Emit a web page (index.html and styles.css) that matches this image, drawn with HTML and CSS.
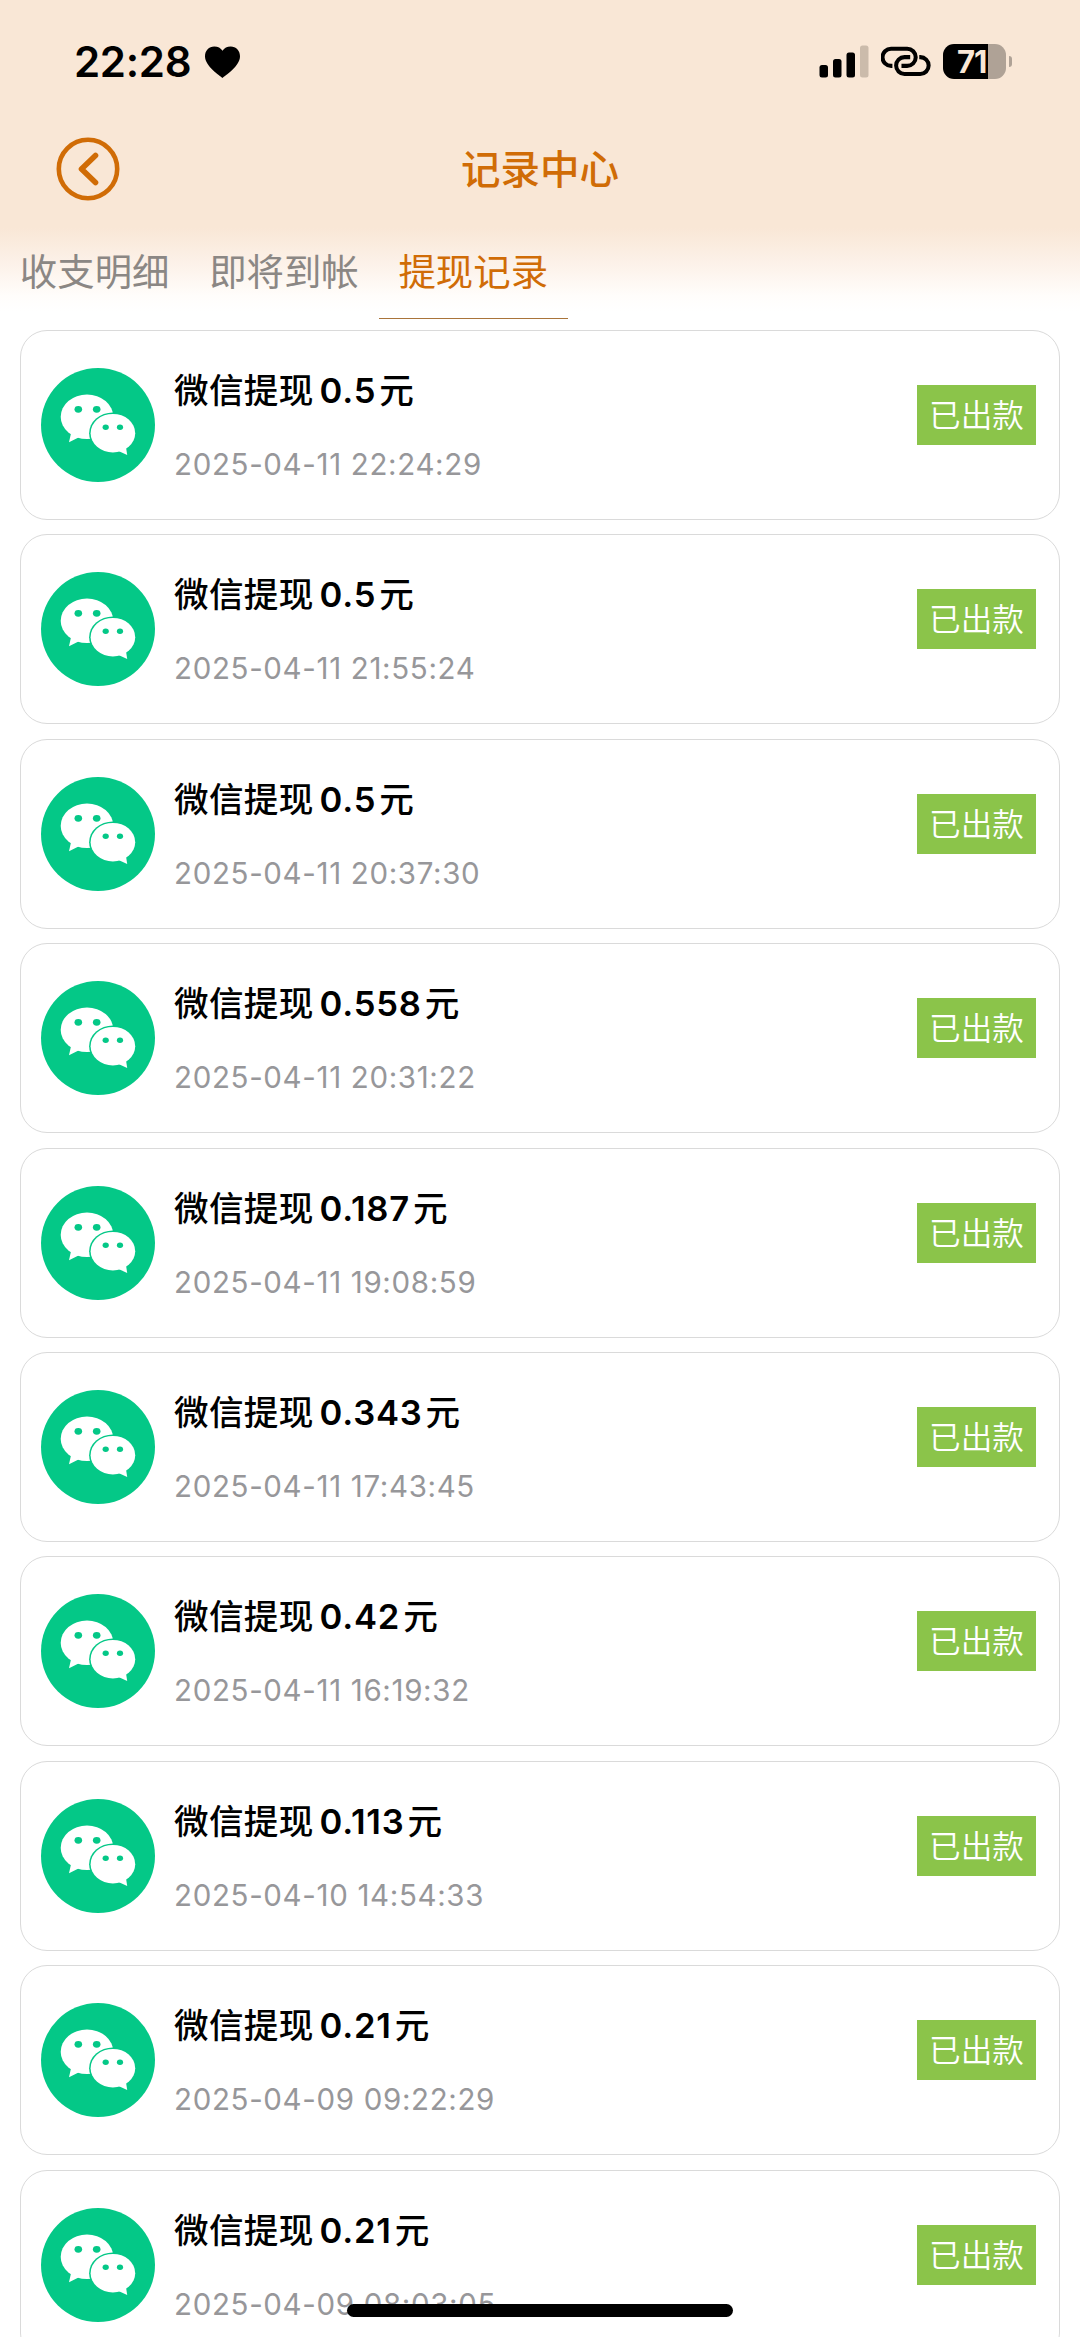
FILE: index.html
```html
<!doctype html>
<html lang="zh-CN">
  <head>
    <meta charset="UTF-8" />
    <meta name="viewport" content="width=device-width, initial-scale=1.0" />
    <title>记录中心</title>
    <link rel="stylesheet" href="styles.css">
  </head>

  <body>
    <!-- shared icon -->
    <svg class="sprite">
      <symbol id="wechat" viewBox="0 0 114 114">
        <circle cx="57" cy="57" r="57" fill="#04c887" />
        <g fill="#fff">
          <ellipse cx="46" cy="48.8" rx="26.3" ry="22.3" />
          <path d="M30.3 64 28 74.3 37.5 69.6z" />
        </g>
        <ellipse cx="71.9" cy="65.2" rx="23.8" ry="20.8" fill="#04c887" />
        <g fill="#fff">
          <ellipse cx="71.9" cy="65.2" rx="22.3" ry="19.3" />
          <path d="M78 83.3 86.2 86.9 84.8 78z" />
        </g>
        <g fill="#04c887">
          <ellipse cx="37.3" cy="41.3" rx="3.8" ry="3.4" />
          <ellipse cx="55.7" cy="41.3" rx="3.8" ry="3.4" />
          <ellipse cx="64.7" cy="59.3" rx="3.1" ry="2.7" />
          <ellipse cx="79" cy="59.3" rx="3.1" ry="2.7" />
        </g>
      </symbol>
    </svg>

    <header class="header">
      <div class="status-bar">
        <span class="time">22:28</span>
        <svg class="heart" viewBox="0 0 35 32">
          <path d="M17.5 32C15 29.6 0 20.5 0 10.3 0 4.5 4 .5 9.3 .5c3.500 0 6.500 1.500 8.200 4.300C19.200 2 22.200 .5 25.700 .5 31 .5 35 4.500 35 10.300 35 20.500 20 29.600 17.500 32z" />
        </svg>
        <svg class="signal" viewBox="0 0 50 33">
          <rect x="0.5" y="20" width="8.5" height="12.5" rx="2.5" />
          <rect x="14" y="14" width="8.5" height="18.5" rx="2.5" />
          <rect x="27.5" y="7.5" width="8.5" height="25" rx="2.5" />
          <rect x="41" y="0.5" width="8.5" height="32" rx="2.5" fill="#cbbbab" />
        </svg>
        <svg class="link" viewBox="298 79 149 92">
          <path d="M332 138h-4a25.500 25.500 0 0 1 0-51h48a25.500 25.500 0 0 1 0 51h-17" />
          <path d="M385 112h-17a25 25 0 0 0 0 50h47a25 25 0 0 0 0-50h-3" />
        </svg>
        <div class="battery">
          <div class="battery-body">71</div>
          <div class="battery-tip"></div>
        </div>
      </div>

      <div class="nav-bar">
        <svg class="back" viewBox="0 0 64 64">
          <circle cx="32" cy="32" r="29.2" />
          <path d="M39.500 18.500 25.500 32 39.500 45.500" />
        </svg>
        <h1>记录中心</h1>
      </div>

      <nav class="tabs">
        <a class="tab">收支明细</a>
        <a class="tab">即将到帐</a>
        <a class="tab active">提现记录</a>
      </nav>
    </header>

    <main class="list">
      <div class="card">
        <svg class="icon"><use href="#wechat" /></svg>
        <div class="info">
          <div class="title">微信提现<span class="num">0.5</span>元</div>
          <div class="date">2025-04-11 22:24:29</div>
        </div>
        <span class="badge">已出款</span>
      </div>
      <div class="card">
        <svg class="icon"><use href="#wechat" /></svg>
        <div class="info">
          <div class="title">微信提现<span class="num">0.5</span>元</div>
          <div class="date">2025-04-11 21:55:24</div>
        </div>
        <span class="badge">已出款</span>
      </div>
      <div class="card">
        <svg class="icon"><use href="#wechat" /></svg>
        <div class="info">
          <div class="title">微信提现<span class="num">0.5</span>元</div>
          <div class="date">2025-04-11 20:37:30</div>
        </div>
        <span class="badge">已出款</span>
      </div>
      <div class="card">
        <svg class="icon"><use href="#wechat" /></svg>
        <div class="info">
          <div class="title">微信提现<span class="num">0.558</span>元</div>
          <div class="date">2025-04-11 20:31:22</div>
        </div>
        <span class="badge">已出款</span>
      </div>
      <div class="card">
        <svg class="icon"><use href="#wechat" /></svg>
        <div class="info">
          <div class="title">微信提现<span class="num">0.187</span>元</div>
          <div class="date">2025-04-11 19:08:59</div>
        </div>
        <span class="badge">已出款</span>
      </div>
      <div class="card">
        <svg class="icon"><use href="#wechat" /></svg>
        <div class="info">
          <div class="title">微信提现<span class="num">0.343</span>元</div>
          <div class="date">2025-04-11 17:43:45</div>
        </div>
        <span class="badge">已出款</span>
      </div>
      <div class="card">
        <svg class="icon"><use href="#wechat" /></svg>
        <div class="info">
          <div class="title">微信提现<span class="num">0.42</span>元</div>
          <div class="date">2025-04-11 16:19:32</div>
        </div>
        <span class="badge">已出款</span>
      </div>
      <div class="card">
        <svg class="icon"><use href="#wechat" /></svg>
        <div class="info">
          <div class="title">微信提现<span class="num">0.113</span>元</div>
          <div class="date">2025-04-10 14:54:33</div>
        </div>
        <span class="badge">已出款</span>
      </div>
      <div class="card">
        <svg class="icon"><use href="#wechat" /></svg>
        <div class="info">
          <div class="title">微信提现<span class="num">0.21</span>元</div>
          <div class="date">2025-04-09 09:22:29</div>
        </div>
        <span class="badge">已出款</span>
      </div>
      <div class="card">
        <svg class="icon"><use href="#wechat" /></svg>
        <div class="info">
          <div class="title">微信提现<span class="num">0.21</span>元</div>
          <div class="date">2025-04-09 08:03:05</div>
        </div>
        <span class="badge">已出款</span>
      </div>
    </main>

    <div class="home-indicator"></div>
  </body>
</html>
```

FILE: styles.css
```css
* {
  box-sizing: border-box;
}
body {
  position: relative;
  margin: 0;
  height: 2337px;
  overflow: hidden;
  background: #fff;
  font-family: Inter, 'Noto Sans CJK SC', sans-serif;
}
svg {
  display: block;
  flex: none;
}
.sprite {
  display: none;
}

/* Header */
.header {
  height: 319px;
  background: linear-gradient(#f9e7d6 0, #f9e7d6 228px, #fcf1e8 262px, #fffdfb 296px, #fff 312px);
}
.status-bar {
  display: flex;
  align-items: center;
  height: 122px;
  padding: 0 68px 0 74px;
}
.time {
  padding-top: 1px;
  font-size: 42px;
  font-weight: 600;
  line-height: 50px;
  letter-spacing: -0.3px;
}
.heart {
  width: 35px;
  height: 32px;
  margin: 2px 0 0 14px;
}
.signal {
  width: 50px;
  height: 33px;
  margin-left: auto;
}
.link {
  width: 50px;
  height: 31px;
  margin: 1px 0 0 12px;
  fill: none;
  stroke: #000;
  stroke-width: 12;
  stroke-linecap: butt;
}
.battery {
  display: flex;
  align-items: center;
  gap: 3px;
  margin-left: 12px;
}
.battery-body {
  width: 63px;
  height: 35px;
  padding-left: 14px;
  border-radius: 11px;
  background: linear-gradient(90deg, #000 45px, #afa296 45px);
  color: #f9e7d6;
  font-size: 31px;
  font-weight: 700;
  line-height: 35px;
  letter-spacing: -1px;
}
.battery-tip {
  width: 3px;
  height: 11px;
  border-radius: 0 4px 4px 0;
  background: #afa296;
}

.nav-bar {
  display: grid;
  grid-template-columns: 64px 1fr 64px;
  align-items: center;
  height: 94px;
  padding: 0 56px;
}
.back {
  width: 64px;
  height: 64px;
  fill: none;
  stroke: #d06c06;
  stroke-width: 4.6;
  stroke-linecap: round;
  stroke-linejoin: round;
}
.back path {
  stroke-width: 5.6;
}
.nav-bar h1 {
  margin: 2px 0 0;
  color: #d06c06;
  font-size: 39.5px;
  font-weight: 500;
  line-height: 56px;
  text-align: center;
}

.tabs {
  display: flex;
  height: 103px;
}
.tab {
  width: 189.3px;
  padding-top: 31px;
  color: #8b8784;
  font-size: 37.4px;
  line-height: 52px;
  text-align: center;
}
.tab.active {
  border-bottom: 1px solid #a9743a;
  color: #d06c06;
}

/* Records */
.list {
  display: flex;
  flex-direction: column;
  gap: 14.4px;
  padding: 11px 20px 0;
}
.card {
  display: flex;
  flex: none;
  align-items: flex-start;
  height: 190px;
  padding: 0 23px 0 19.5px;
  border: 1px solid #dadada;
  border-radius: 27px;
}
.icon {
  width: 114px;
  height: 114px;
  margin-top: 37px;
}
.info {
  flex: 1;
  padding: 33px 0 0 19.5px;
}
.title {
  font-size: 34.6px;
  font-weight: 500;
  line-height: 52px;
  letter-spacing: 0.3px;
}
.num {
  margin: 0 3px 0 6px;
  font-weight: 600;
  letter-spacing: 0.8px;
}
.date {
  margin-top: 27px;
  color: #97979a;
  font-size: 29.5px;
  line-height: 42px;
  letter-spacing: 0.65px;
}
.badge {
  width: 119px;
  height: 60px;
  margin-top: 54px;
  background: #8bc44a;
  color: #fff;
  font-size: 31.6px;
  font-weight: 350;
  line-height: 61px;
  text-align: center;
}

.home-indicator {
  position: absolute;
  left: 347px;
  top: 2304px;
  width: 386px;
  height: 13px;
  border-radius: 7px;
  background: #000;
}
```
